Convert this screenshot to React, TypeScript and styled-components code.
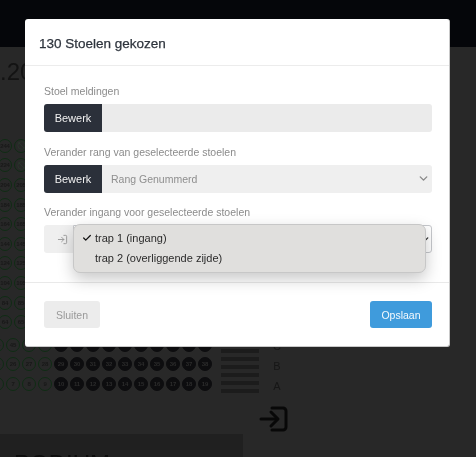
import { Check, ChevronDown, LogIn, Ban } from 'lucide-react';
import styled, { createGlobalStyle } from 'styled-components';

const GlobalStyle = createGlobalStyle`
  html, body {
    margin: 0;
    padding: 0;
    background: #282828;
  }
  body {
    font-family: "Liberation Sans", Arial, sans-serif;
  }
`;

const Page = styled.div`
  position: relative;
  width: 476px;
  height: 457px;
  overflow: hidden;
  background: #282828;
  filter: blur(0.4px);
`;

const TopBar = styled.div`
  height: 47px;
  background: #05060a;
`;

const EventDate = styled.h1`
  margin: 0;
  height: 89px;
  padding-top: 11px;
  box-sizing: border-box;
  font-size: 24px;
  line-height: 28px;
  font-weight: 400;
  color: #131313;
  white-space: nowrap;
`;

const UpperRows = styled.div`
  display: flex;
  flex-direction: column;
  margin-bottom: 3px;
`;

const LowerBlock = styled.div`
  display: flex;
`;

const LowerRows = styled.div`
  display: flex;
  flex-direction: column;
  width: 221px;
`;

const SeatRow = styled.div<{ $shift: number }>`
  display: flex;
  gap: 2px;
  height: 19.6px;
  align-items: center;
  margin-left: ${(p) => p.$shift}px;
`;

const Seat = styled.div<{ $taken?: boolean }>`
  flex: none;
  box-sizing: border-box;
  width: 14px;
  height: 14px;
  border-radius: 50%;
  display: flex;
  align-items: center;
  justify-content: center;
  font-size: 6px;
  font-weight: 700;
  letter-spacing: -0.2px;
  border: 1.4px solid ${(p) => (p.$taken ? '#0d0d0f' : '#0f2c14')};
  background: ${(p) => (p.$taken ? '#0d0d0f' : 'transparent')};
  color: ${(p) => (p.$taken ? '#2c2c2c' : '#181818')};
`;

const Stripes = styled.div`
  display: flex;
  flex-direction: column;
  gap: 4px;
  width: 38px;
  padding-top: 14px;
`;

const Stripe = styled.div`
  height: 4px;
  background: #1c1c1c;
`;

const RowLabels = styled.div`
  display: flex;
  flex-direction: column;
  margin-left: 12px;
  width: 12px;
  padding-top: 1px;
`;

const RowLabel = styled.div`
  height: 20px;
  line-height: 20px;
  text-align: center;
  font-size: 11px;
  color: #161616;
`;

const ExitRow = styled.div`
  display: flex;
  padding: 10px 0 0 259px;
  height: 25px;
  color: #080808;
`;

const Podium = styled.div`
  margin-top: 3px;
  width: 243px;
  height: 60px;
  padding: 16px 0 0 14px;
  box-sizing: border-box;
  background: #202020;
  font-size: 24px;
  line-height: 28px;
  color: #0c0c0c;
`;

const Modal = styled.div`
  position: absolute;
  left: 25px;
  top: 19px;
  width: 425px;
  box-sizing: border-box;
  background: #fff;
  border-radius: 3px;
  border: 1px solid #c9c9c9;
  border-width: 0 1px 1px 0;
  display: flex;
  flex-direction: column;
`;

const ModalHeader = styled.div`
  height: 47px;
  box-sizing: border-box;
  padding: 17px 14px 0;
  border-bottom: 1px solid #ececec;
  font-size: 13.5px;
  line-height: 16px;
  font-weight: 400;
  color: #2e343d;
  -webkit-text-stroke: 0.25px #2e343d;
`;

const ModalBody = styled.div`
  padding: 18px 17px 0 19px;
  display: flex;
  flex-direction: column;
  height: 217px;
  box-sizing: border-box;
  border-bottom: 1px solid #e9e9e9;
`;

const FieldLabel = styled.div`
  height: 14px;
  line-height: 14px;
  font-size: 10.5px;
  color: #8b8b8b;
  margin-bottom: 6px;
`;

const Group = styled.div`
  position: relative;
  display: flex;
  height: 28px;
  margin-bottom: 12.5px;
  &:last-child {
    margin-bottom: 0;
  }
`;

const EditButton = styled.div`
  flex: none;
  width: 58px;
  display: flex;
  align-items: center;
  justify-content: center;
  background: #2b303a;
  color: #f1f1f1;
  font-size: 11px;
  border-radius: 3px 0 0 3px;
`;

const Input = styled.div`
  flex: 1;
  background: #ebebeb;
  border-radius: 0 3px 3px 0;
`;

const SelectBox = styled.div<{ $open?: boolean }>`
  flex: 1;
  box-sizing: border-box;
  display: flex;
  align-items: center;
  justify-content: space-between;
  padding: 0 ${(p) => (p.$open ? '0' : '2px')} 0 9px;
  background: ${(p) => (p.$open ? '#fff' : '#efefef')};
  border: ${(p) => (p.$open ? '1px solid #c6c8cc' : 'none')};
  border-radius: 0 3px 3px 0;
  font-size: 10.5px;
  color: #8e8e8e;
  svg {
    color: ${(p) => (p.$open ? '#333' : '#888')};
  }
`;

const IconAddon = styled.div`
  flex: none;
  width: 29px;
  display: flex;
  align-items: center;
  justify-content: flex-end;
  padding-right: 5px;
  box-sizing: border-box;
  background: #efefef;
  color: #999;
  border-radius: 3px 0 0 3px;
`;

const Dropdown = styled.div`
  position: absolute;
  left: 29px;
  top: -1px;
  width: 353px;
  height: 49px;
  box-sizing: border-box;
  padding: 3px 0 0;
  background: #e0dfdd;
  border: 1px solid #c7c7c7;
  border-radius: 7px;
  box-shadow: 0 6px 16px rgba(0, 0, 0, 0.22);
`;

const Option = styled.div`
  display: flex;
  align-items: center;
  height: 20px;
  padding-left: 8px;
  font-size: 11px;
  color: #2b2b2b;
`;

const CheckSlot = styled.span`
  width: 13px;
  display: flex;
  color: #111;
`;

const ModalFooter = styled.div`
  display: flex;
  justify-content: space-between;
  padding: 18px 17px 18px 19px;
`;

const FooterButton = styled.div<{ $primary?: boolean }>`
  height: 27px;
  width: ${(p) => (p.$primary ? '62px' : '56px')};
  display: flex;
  align-items: center;
  justify-content: center;
  border-radius: 3px;
  font-size: 10.5px;
  background: ${(p) => (p.$primary ? '#3f9bdc' : '#ececec')};
  color: ${(p) => (p.$primary ? '#f4f9fd' : '#999')};
`;

const upperStarts = [244, 224, 204, 184, 164, 144, 124, 104, 84, 64];
const lowerStarts = [45, 26, 7];

function ExitIcon() {
  return (
    <svg width='29' height='26' viewBox='0 0 29 26' fill='none' stroke='currentColor' strokeWidth='3' strokeLinecap='round' strokeLinejoin='round'>
      <path d='M13 2h11a3 3 0 0 1 3 3v16a3 3 0 0 1-3 3H13' />
      <path d='M2 13h16' />
      <path d='M12 6l7 7-7 7' />
    </svg>
  );
}

export default function App() {
  return (
    <Page>
      <GlobalStyle />
      <TopBar />
      <EventDate>.2019</EventDate>
      <UpperRows>
        {upperStarts.map((start, row) => (
          <SeatRow $shift={-2} key={start}>
            {[0, 1, 2].map((i) => (
              <Seat key={i}>
                {row < 2 && i === 1 ? <Ban size={9} color='#2a3a2c' /> : start + i}
              </Seat>
            ))}
          </SeatRow>
        ))}
      </UpperRows>
      <LowerBlock>
        <LowerRows>
          {lowerStarts.map((start) => (
            <SeatRow $shift={-10} key={start}>
              {Array.from({ length: 14 }, (_, i) => (
                <Seat $taken={i > 3} key={i}>
                  {start - 1 + i}
                </Seat>
              ))}
            </SeatRow>
          ))}
        </LowerRows>
        <Stripes>
          {[0, 1, 2, 3, 4, 5].map((i) => (
            <Stripe key={i} />
          ))}
        </Stripes>
        <RowLabels>
          <RowLabel>C</RowLabel>
          <RowLabel>B</RowLabel>
          <RowLabel>A</RowLabel>
        </RowLabels>
      </LowerBlock>
      <ExitRow>
        <ExitIcon />
      </ExitRow>
      <Podium>PODIUM</Podium>

      <Modal>
        <ModalHeader>130 Stoelen gekozen</ModalHeader>
        <ModalBody>
          <FieldLabel>Stoel meldingen</FieldLabel>
          <Group>
            <EditButton>Bewerk</EditButton>
            <Input />
          </Group>
          <FieldLabel>Verander rang van geselecteerde stoelen</FieldLabel>
          <Group>
            <EditButton>Bewerk</EditButton>
            <SelectBox>
              Rang Genummerd
              <ChevronDown size={13} strokeWidth={2.5} />
            </SelectBox>
          </Group>
          <FieldLabel>Verander ingang voor geselecteerde stoelen</FieldLabel>
          <Group>
            <IconAddon>
              <LogIn size={11} />
            </IconAddon>
            <SelectBox $open>
              <span />
              <ChevronDown size={13} strokeWidth={2.5} />
            </SelectBox>
            <Dropdown>
              <Option>
                <CheckSlot>
                  <Check size={10} strokeWidth={3} />
                </CheckSlot>
                trap 1 (ingang)
              </Option>
              <Option>
                <CheckSlot />
                trap 2 (overliggende zijde)
              </Option>
            </Dropdown>
          </Group>
        </ModalBody>
        <ModalFooter>
          <FooterButton>Sluiten</FooterButton>
          <FooterButton $primary>Opslaan</FooterButton>
        </ModalFooter>
      </Modal>
    </Page>
  );
}
